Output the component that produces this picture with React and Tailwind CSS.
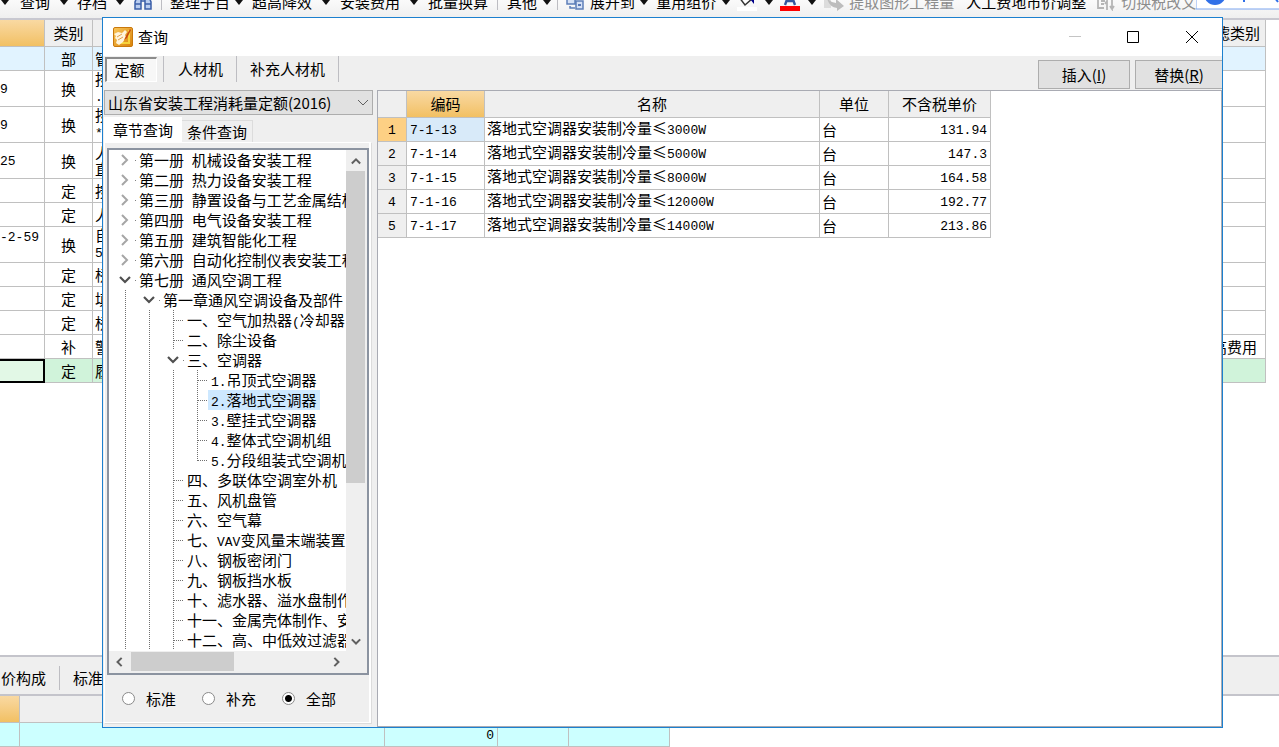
import React, { useState } from "react";

const CELL = "border-r border-b border-[#c0c0c0] p-0 font-normal";

/* Draws Latin runs in a half-width face next to full-width Chinese glyphs. */
function Mixed({ children }) {
  return children.split(/([\x20-\x7e]+)/).map((part, i) =>
    /^[\x20-\x7e]+$/.test(part) ? (
      <span key={i} className="font-['Liberation_Mono',monospace] text-[13px]">{part}</span>
    ) : (
      part
    )
  );
}

function Chevron({ dir, className }) {
  const d = { right: "M4 1 L9 6 L4 11", left: "M8 1 L3 6 L8 11", down: "M1 4 L6 9 L11 4", up: "M1 9 L6 4 L11 9" }[dir];
  return (
    <svg viewBox="0 0 12 12" className={className || "size-3 text-[#606060]"} fill="none" stroke="currentColor" strokeWidth="2.4">
      <path d={d} />
    </svg>
  );
}

function Arrow({ className }) {
  return (
    <button aria-label="展开菜单" className={"flex h-4 shrink-0 items-center justify-center " + className}>
      <svg viewBox="0 0 8 5" className="h-[5px] w-2"><path d="M0 0H8L4 5Z" fill="#111" /></svg>
    </button>
  );
}

function Sep({ className }) {
  return <span className={"h-4 w-px shrink-0 bg-[#bdbdc2] " + className} />;
}

function Toolbar() {
  return (
    <header className="flex h-5 shrink-0 items-end overflow-hidden border-b-2 border-[#c8c8d0] bg-linear-to-b from-[#fafafa] to-[#efefef] pb-2 leading-4 whitespace-nowrap">
      <Arrow className="w-5 pr-[10px]" />
      <button>查询</button>
      <Arrow className="w-[27px]" />
      <button>存档</button>
      <Arrow className="w-[26px]" />
      <button aria-label="查找" className="shrink-0">
        <svg viewBox="0 0 20 16" className="h-4 w-5" fill="#b9cdf0" stroke="#3b5fa8" strokeWidth="1.5">
          <path d="M2 15V8L4 3H8V15ZM12 15V3H16L18 8V15Z" /><path d="M8 7H12M2 10H8M12 10H18" />
        </svg>
      </button>
      <Sep className="mx-2" />
      <button>整理子目</button>
      <Arrow className="w-[22px] pr-1" />
      <button>超高降效</button>
      <Arrow className="w-7" />
      <button>安装费用</button>
      <Arrow className="w-7" />
      <button>批量换算</button>
      <Sep className="mx-[9px]" />
      <button>其他</button>
      <Arrow className="w-[20px]" />
      <Sep className="mr-2" />
      <button className="flex shrink-0 items-end gap-[6px]">
        <svg viewBox="0 0 18 16" className="h-4 w-[18px]" fill="#d5e1f5" stroke="#5d7fb8" strokeWidth="1.5">
          <path d="M1 1H9V10H1ZM10 7H17V15H10ZM4 12V14H9" /><path d="M12 11H15" stroke="#2f55a0" />
        </svg>
        展开到
      </button>
      <Arrow className="w-[21px] pr-1" />
      <button>重用组价</button>
      <Arrow className="w-5" />
      <button aria-label="填充颜色" className="shrink-0">
        <svg viewBox="0 0 22 16" className="-mb-px h-4 w-[22px]">
          <path d="M3 2L9 10L17 3" fill="#fff" stroke="#333" strokeWidth="1.5" /><path d="M14 4L18 3L18 9Z" fill="#00008b" /><path d="M1 12H21V16H1Z" fill="#fff" />
        </svg>
      </button>
      <Arrow className="w-[22px]" />
      <button aria-label="字体颜色" className="shrink-0">
        <svg viewBox="0 0 20 16" className="-mb-px h-4 w-5">
          <path d="M5 10L10 -4L15 10M7 6H13" fill="none" stroke="#35569c" strokeWidth="2.4" /><path d="M0 11H20V16H0Z" fill="#f00" />
        </svg>
      </button>
      <Arrow className="w-6" />
      <button className="flex shrink-0 items-end gap-[5px] text-[#8d8d8d]">
        <svg viewBox="0 0 20 16" className="-mb-px h-4 w-5" fill="#bdbdbd">
          <path d="M0 2H7V13H0Z" fill="#dcdcdc" /><path d="M3 3Q7 8 12 8V4L20 11L13 16V13Q5 12 3 3Z" />
        </svg>
        提取图形工程量
      </button>
      <button className="ml-3">人工费地市价调整</button>
      <button className="ml-[10px] flex min-w-0 items-end gap-[5px] text-[#8d8d8d]">
        <svg viewBox="0 0 20 16" className="-mb-px h-4 w-5 shrink-0" fill="none" stroke="#b5b5b5" strokeWidth="1.8">
          <path d="M1 2H12M2 1V13H8M5 6H9M5 9H8M11 15V6L9 9M16 5V14L14 11M16 14L18 11" />
        </svg>
        切换税改文
      </button>
      <div className="h-[18px] min-w-0 flex-1 self-start overflow-hidden">
        <svg viewBox="0 0 83 10" className="h-[10px] w-[83px]">
          <path d="M0 -2H90V9H0Z" fill="#fff" stroke="#7ba4ef" /><circle cx="19" cy="-6" r="11" fill="#2f6fe8" /><path d="M48 -2V2M79 -2L82 2" stroke="#2f6fe8" strokeWidth="2" />
        </svg>
      </div>
    </header>
  );
}

const SHEET = [
  ["", "部", "管", "", "h-6 bg-[#e1f3ff]"],
  ["9", "换", "按\n.", "", "h-9"],
  ["9", "换", "按\n*", "", "h-9"],
  ["25", "换", "人\n直", "", "h-9"],
  ["", "定", "按", "", "h-6"],
  ["", "定", "人", "", "h-6"],
  ["-2-59\n\u00a0", "换", "自\n5", "", "h-9"],
  ["", "定", "桥", "", "h-6"],
  ["", "定", "填", "", "h-6"],
  ["", "定", "桥", "", "h-6"],
  ["", "补", "警", "超高费用", "h-6"],
  ["", "定", "履", "", "h-6 bg-[#d0f3da]"],
];

function Sheet() {
  return (
    <div className="min-h-0 flex-1 overflow-hidden bg-white pr-[13px]">
      <table className="w-full table-fixed border-separate border-spacing-0 leading-4">
        <colgroup><col className="w-[45px]" /><col className="w-12" /><col /><col className="w-[71px]" /></colgroup>
        <thead>
          <tr className="h-[27px] bg-[#efefef]">
            <th className={CELL + " bg-linear-to-b from-[#f9d9a2] to-[#f2c062]"} />
            <th className={CELL}>类别</th>
            <th className={CELL} />
            <th className={CELL}>过滤类别</th>
          </tr>
        </thead>
        <tbody>
          {SHEET.map(([code, kind, name, fee, tone], i) => (
            <tr key={i} className={tone}>
              <td className={i === 11 ? "border-2 border-l-0 border-black bg-[#e2f8e6] p-0" : CELL + " whitespace-pre"}><Mixed>{code}</Mixed></td>
              <td className={CELL + " text-center"}>{kind}</td>
              <td className={CELL + " pl-[2px] whitespace-pre"}><Mixed>{name}</Mixed></td>
              <td className={CELL + " pl-[2px] whitespace-nowrap"}>{fee}</td>
            </tr>
          ))}
        </tbody>
      </table>
    </div>
  );
}

function BottomPane() {
  return (
    <footer className="shrink-0 bg-white">
      <div className="flex h-[41px] items-center border-y-2 border-[#c4c4cb] bg-[#efefef] pt-1 leading-4">
        <button className="pl-px">价构成</button>
        <Sep className="mx-[13px] h-6" />
        <button>标准换算</button>
      </div>
      <table className="w-[670px] table-fixed border-separate border-spacing-0 leading-4">
        <colgroup><col className="w-5" /><col className="w-[365px]" /><col className="w-[113px]" /><col className="w-[71px]" /><col /></colgroup>
        <thead>
          <tr className="h-[27px] bg-[#efefef]">
            <th className={CELL + " bg-linear-to-b from-[#f9d9a2] to-[#f2c062]"} />
            <th className={CELL} /><th className={CELL} /><th className={CELL} /><th className={CELL} />
          </tr>
        </thead>
        <tbody>
          <tr className="h-6 bg-[#ccffff]">
            <td className={CELL} /><td className={CELL} />
            <td className={CELL + " pr-[3px] text-right"}><Mixed>0</Mixed></td>
            <td className={CELL} /><td className={CELL} />
          </tr>
        </tbody>
      </table>
    </footer>
  );
}

const TREE = [
  [0, "closed", "第一册 机械设备安装工程"],
  [0, "closed", "第二册 热力设备安装工程"],
  [0, "closed", "第三册 静置设备与工艺金属结构"],
  [0, "closed", "第四册 电气设备安装工程"],
  [0, "closed", "第五册 建筑智能化工程"],
  [0, "closed", "第六册 自动化控制仪表安装工程"],
  [0, "open", "第七册 通风空调工程"],
  [1, "open", "第一章通风空调设备及部件"],
  [2, "leaf", "一、空气加热器(冷却器"],
  [2, "leaf", "二、除尘设备"],
  [2, "open", "三、空调器"],
  [3, "leaf", "1.吊顶式空调器"],
  [3, "leaf", "2.落地式空调器"],
  [3, "leaf", "3.壁挂式空调器"],
  [3, "leaf", "4.整体式空调机组"],
  [3, "last", "5.分段组装式空调机组"],
  [2, "leaf", "四、多联体空调室外机"],
  [2, "leaf", "五、风机盘管"],
  [2, "leaf", "六、空气幕"],
  [2, "leaf", "七、VAV变风量末端装置"],
  [2, "leaf", "八、钢板密闭门"],
  [2, "leaf", "九、钢板挡水板"],
  [2, "leaf", "十、滤水器、溢水盘制作"],
  [2, "leaf", "十一、金属壳体制作、安装"],
  [2, "leaf", "十二、高、中低效过滤器"],
];

function Guide({ kind }) {
  return (
    <svg viewBox="0 0 24 20" className="h-5 w-6 shrink-0" fill="none">
      {kind === "closed" && <path d="M10 5L15 10L10 15" stroke="#a6a6a6" strokeWidth="2" />}
      {kind === "open" && <path d="M8 7L13 12L18 7" stroke="#505050" strokeWidth="2.2" />}
      {(kind === "closed" || kind === "open") && <path d="M23 10.5H24" stroke="#808080" />}
      {(kind === "line" || kind === "leaf") && <path d="M13.5 0V20" stroke="#707070" strokeDasharray="1 1" />}
      {kind === "last" && <path d="M13.5 0V11" stroke="#707070" strokeDasharray="1 1" />}
      {(kind === "leaf" || kind === "last") && <path d="M14 10.5H24" stroke="#707070" strokeDasharray="1 1" />}
    </svg>
  );
}

function Tree() {
  const [selected, setSelected] = useState(12);
  return (
    <div className="flex min-h-0 flex-1 flex-col border-2 border-[#8b93a0] bg-[#efefef]">
      <div className="flex min-h-0 flex-1">
        <ul className="min-w-0 flex-1 overflow-hidden bg-white pl-[3px]">
          {TREE.map(([level, kind, label], i) => (
            <li key={i} className="flex h-5 items-center">
              {Array.from({ length: level }, (_, k) => <Guide key={k} kind="line" />)}
              <Guide kind={kind} />
              <button
                onClick={() => setSelected(i)}
                className={"h-5 shrink-0 px-[3px] leading-5 whitespace-pre " + (i === selected ? "bg-[#cde8ff]" : "")}
              >
                <Mixed>{label}</Mixed>
              </button>
            </li>
          ))}
        </ul>
        <div className="mr-[2px] flex w-[19px] flex-col items-center bg-[#efefef]">
          <button aria-label="向上" className="flex h-[21px] items-center"><Chevron dir="up" className="size-[10px] text-[#606060]" /></button>
          <div className="flex w-full flex-1 flex-col"><div className="h-[68%] bg-[#cdcdcd]" /></div>
          <button aria-label="向下" className="flex h-[21px] items-center"><Chevron dir="down" className="size-[10px] text-[#606060]" /></button>
        </div>
      </div>
      <div className="mt-px mr-5 mb-[2px] flex h-[19px] items-center">
        <button aria-label="向左" className="flex w-[22px] justify-center"><Chevron dir="left" className="size-[10px] text-[#606060]" /></button>
        <div className="h-full flex-1"><div className="h-full w-[53%] bg-[#cdcdcd]" /></div>
        <button aria-label="向右" className="flex w-[22px] justify-center"><Chevron dir="right" className="size-[10px] text-[#606060]" /></button>
      </div>
    </div>
  );
}

function SidePanel() {
  const [scope, setScope] = useState("全部");
  return (
    <aside className="flex w-[274px] shrink-0 flex-col pr-1 pl-px">
      <div className="relative shrink-0">
        <select aria-label="定额库" className="h-[25px] w-full appearance-none border border-[#adadad] bg-[#e1e1e1] pl-[3px] leading-5">
          <option>山东省安装工程消耗量定额(2016)</option>
        </select>
        <svg viewBox="0 0 12 8" className="pointer-events-none absolute top-[9px] right-1 h-2 w-3" fill="none" stroke="#606060"><path d="M1 1L6 6L11 1" /></svg>
      </div>
      <div className="mt-[2px] flex h-[25px] shrink-0 items-end">
        <button className="h-[25px] w-[78px] bg-white leading-6">章节查询</button>
        <button className="h-[22px] w-[71px] border-t border-r border-[#dcdcdc] leading-[22px]">条件查询</button>
      </div>
      <div className="mr-[2px] mb-1 flex min-h-0 flex-1 flex-col border border-r-2 border-white pt-[5px] pl-[2px] shadow-[1px_1px_0_#dcdcdc]">
        <Tree />
        <div role="radiogroup" aria-label="范围" className="flex h-[47px] shrink-0 items-center gap-[26px] pl-[15px]">
          {["标准", "补充", "全部"].map((name) => (
            <label key={name} className="flex items-center gap-[11px] leading-5">
              <input
                type="radio"
                name="scope"
                checked={scope === name}
                onChange={() => setScope(name)}
                className="size-[13px] appearance-none rounded-full border border-[#8a8a8a] bg-white checked:bg-[radial-gradient(circle,#000_0_3px,#fff_4px)]"
              />
              {name}
            </label>
          ))}
        </div>
      </div>
    </aside>
  );
}

const RESULTS = [
  ["7-1-13", "落地式空调器安装制冷量≤3000W", "131.94"],
  ["7-1-14", "落地式空调器安装制冷量≤5000W", "147.3"],
  ["7-1-15", "落地式空调器安装制冷量≤8000W", "164.58"],
  ["7-1-16", "落地式空调器安装制冷量≤12000W", "192.77"],
  ["7-1-17", "落地式空调器安装制冷量≤14000W", "213.86"],
];

function Results() {
  return (
    <section className="min-w-0 flex-1 overflow-hidden border border-[#a9abb3] bg-white">
      <table className="w-[613px] table-fixed border-separate border-spacing-0 leading-4">
        <colgroup><col className="w-[29px]" /><col className="w-[78px]" /><col /><col className="w-[69px]" /><col className="w-[102px]" /></colgroup>
        <thead>
          <tr className="h-[27px] bg-[#efefef]">
            <th className={CELL} />
            <th className={CELL + " bg-linear-to-b from-[#f9d9a2] to-[#f2c062]"}>编码</th>
            <th className={CELL}>名称</th>
            <th className={CELL}>单位</th>
            <th className={CELL}>不含税单价</th>
          </tr>
        </thead>
        <tbody>
          {RESULTS.map(([code, name, price], i) => (
            <tr key={code} className="h-6">
              <td className={CELL + " text-center " + (i === 0 ? "bg-[#fdd084]" : "bg-[#efefef]")}><Mixed>{String(i + 1)}</Mixed></td>
              <td className={CELL + " pl-[3px] " + (i === 0 ? "bg-[#d8eaf9]" : "")}><Mixed>{code}</Mixed></td>
              <td className={CELL + " pl-[2px] whitespace-nowrap"}><Mixed>{name}</Mixed></td>
              <td className={CELL + " pl-[2px]"}>台</td>
              <td className={CELL + " pr-[3px] text-right"}><Mixed>{price}</Mixed></td>
            </tr>
          ))}
        </tbody>
      </table>
    </section>
  );
}

function AppIcon() {
  return (
    <svg viewBox="0 0 20 20" className="size-5">
      <defs>
        <linearGradient id="gold" x1="0" y1="0" x2="1" y2="1"><stop offset="0" stopColor="#f9c65a" /><stop offset="1" stopColor="#d98208" /></linearGradient>
      </defs>
      <rect x=".5" y=".5" width="19" height="19" rx="1.5" fill="url(#gold)" stroke="#c9780c" />
      <path d="M16 3V16H4" fill="none" stroke="#f6d33c" strokeWidth="2" />
      <path d="M1 7L5 5L9 6L12 3L14 5L12 8L13 10L10 15L6 18L3 16L4 13L2 11L3 9Z" fill="#fff4dc" />
      <path d="M4 10L9 7M5 13L10 10" stroke="#d98a2a" strokeWidth=".8" />
      <path d="M17 2L13 9L11 13L14 11L18 3Z" fill="#c8480e" />
    </svg>
  );
}

function QueryDialog() {
  return (
    <div role="dialog" aria-label="查询" className="absolute top-[17px] right-14 bottom-[19px] left-[102px] flex flex-col overflow-hidden border border-[#1c80cf] bg-[#efefef]">
      <div className="flex h-[38px] shrink-0 items-center bg-white pl-[10px]">
        <AppIcon />
        <h1 className="flex-1 pl-[5px]">查询</h1>
        <button aria-label="最小化" className="flex w-[58px] justify-center"><svg viewBox="0 0 12 12" className="size-3"><path d="M0 5.500H12" stroke="#c4c4c4" /></svg></button>
        <button aria-label="最大化" className="flex w-[58px] justify-center"><svg viewBox="0 0 12 12" className="size-3"><path d="M.5.5H11.500V11.500H.5Z" fill="none" stroke="#000" /></svg></button>
        <button aria-label="关闭" className="flex w-[60px] justify-center"><svg viewBox="0 0 12 12" className="size-3"><path d="M0 0L12 12M12 0L0 12" stroke="#000" /></svg></button>
      </div>
      <div className="flex h-[34px] shrink-0 justify-between leading-4">
        <nav className="flex items-center pb-2 pl-[2px]">
          <button className="mt-px h-[25px] w-[52px] border-t-2 border-l-2 border-[#8c8c8c] border-r border-r-white border-b border-b-white bg-[#f7f7f7] pr-1">定额</button>
          <Sep className="mr-[14px] ml-[6px] h-[26px]" />
          <button>人材机</button>
          <Sep className="mx-[13px] h-[26px]" />
          <button>补充人材机</button>
          <Sep className="ml-[13px] h-[26px]" />
        </nav>
        <div className="flex items-end gap-[5px] pb-px">
          <button className="h-[29px] w-[92px] border border-[#adadad] bg-[#e1e1e1]">插入(<u>I</u>)</button>
          <button className="h-[29px] w-[87px] border border-r-0 border-[#adadad] bg-[#e1e1e1]">替换(<u>R</u>)</button>
        </div>
      </div>
      <div className="flex min-h-0 flex-1">
        <SidePanel />
        <Results />
      </div>
    </div>
  );
}

export default function App() {
  return (
    <main className="relative flex h-screen flex-col overflow-hidden bg-white font-['Noto_Sans_CJK_SC',sans-serif] text-[15px] leading-5 text-black">
      <Toolbar />
      <Sheet />
      <BottomPane />
      <QueryDialog />
    </main>
  );
}
